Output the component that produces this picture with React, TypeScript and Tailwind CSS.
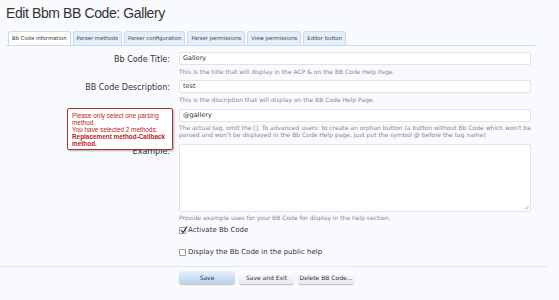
import React from "react";

const tabs = [
  "Bb Code information",
  "Parser methods",
  "Parser configuration",
  "Parser permissions",
  "View permissions",
  "Editor button",
];

function Row({ label, children, mt }: { label: string; children: React.ReactNode; mt?: string }) {
  return (
    <div className={`flex ${mt ?? ""}`}>
      <div className="w-[179px] shrink-0 pr-[9px] text-right text-[8px] leading-[13px] text-[#333] pt-[1px]">{label}</div>
      <div className="flex-1 min-w-0">{children}</div>
    </div>
  );
}

const inputCls =
  "h-[13px] bg-white border border-[#e0e3e8] rounded-[2px] text-[6.5px] leading-[11px] pl-[3px] text-[#333]";

export default function App() {
  return (
    <div
      className="w-[559px] h-[300px] bg-[#f9fafd] overflow-hidden relative"
      style={{ fontFamily: '"DejaVu Sans", Tahoma, sans-serif' }}
    >
      <div
        className="pl-[6px] pt-[4px] text-[14px] leading-[19px] tracking-[-0.4px] text-[#333]"
        style={{ fontFamily: '"Liberation Sans", sans-serif' }}
      >
        Edit Bbm BB Code: Gallery
      </div>
      <div className="mt-[8px] ml-[6px] mr-[24px] flex items-end gap-[2px] border-b border-[#c8dbef] pl-[2px]">
        {tabs.map((t, i) => (
          <div
            key={t}
            className={`h-[14px] px-[3px] text-[5.3px] leading-[13px] rounded-t-[3px] border border-b-0 ${
              i === 0 ? "bg-white border-[#c8dbef] text-[#333]" : "bg-[#e4eef9] border-[#c8dbef] text-[#444]"
            }`}
          >
            {t}
          </div>
        ))}
      </div>

      <div className="pr-[28px] mt-[6px]">
        <Row label="Bb Code Title:">
          <div className={inputCls}>Gallery</div>
          <div className="mt-[3px] text-[6px] leading-[8px] text-[#888]">
            This is the title that will display in the ACP &amp; on the BB Code Help Page.
          </div>
        </Row>
        <Row label="BB Code Description:" mt="mt-[4px]">
          <div className={inputCls}>test</div>
          <div className="mt-[3px] text-[6px] leading-[8px] text-[#888]">
            This is the discription that will display on the BB Code Help Page.
          </div>
        </Row>
        <Row label="" mt="mt-[5px]">
          <div className={inputCls}>@gallery</div>
          <div className="mt-[2px] text-[6px] leading-[7px] text-[#888]">
            The actual tag, omit the []. To advanced users: to create an orphan button (a button without Bb Code which won't be parsed
            and won't be displayed in the Bb Code Help page, just put the symbol @ before the tag name)
          </div>
        </Row>
        <Row label="Example:" mt="mt-[6px]">
          <div className="h-[68px] bg-white border border-[#e0e3e8] rounded-[2px] relative">
            <svg className="absolute right-[1px] bottom-[1px]" width="5" height="5" viewBox="0 0 5 5">
              <path d="M4.5 0.5 L0.5 4.5 M4.5 2.5 L2.5 4.5" stroke="#999" strokeWidth="0.7" />
            </svg>
          </div>
          <div className="mt-[2px] text-[6px] leading-[8px] text-[#888]">
            Provide example uses for your BB Code for display in the help section.
          </div>
          <div className="mt-[3px] flex items-center gap-[2px] text-[7px] leading-[10px] text-[#333]">
            <span className="relative w-[7px] h-[7px] border border-[#999] rounded-[1px] bg-white">
              <svg className="absolute -top-[2px] left-0" width="8" height="8" viewBox="0 0 8 8">
                <path d="M1 4 L3 6.5 L7 0.5" stroke="#333" strokeWidth="1.2" fill="none" />
              </svg>
            </span>
            Activate Bb Code
          </div>
          <div className="mt-[12px] flex items-center gap-[2px] text-[7px] leading-[10px] text-[#333]">
            <span className="w-[7px] h-[7px] border border-[#999] rounded-[1px] bg-white" />
            Display the Bb Code in the public help
          </div>
        </Row>
      </div>

      <div className="mt-[9px] mr-[11px] border-t border-[#e3e7ee]" />
      <div className="mt-[4px] pl-[179px] flex gap-[4px]">
        <div className="w-[56px] h-[13px] rounded-[3px] text-[6px] leading-[13px] text-center text-[#333] bg-gradient-to-b from-[#e6f0fa] to-[#b9d1ea] shadow-[0_1px_1px_rgba(0,0,0,0.25)]">
          Save
        </div>
        <div className="w-[55px] h-[13px] rounded-[3px] text-[6px] leading-[13px] text-center text-[#333] bg-gradient-to-b from-[#ffffff] to-[#e6e9ef] shadow-[0_1px_1px_rgba(0,0,0,0.25)]">
          Save and Exit
        </div>
        <div className="w-[56px] h-[13px] rounded-[3px] text-[6px] leading-[13px] text-center text-[#333] bg-gradient-to-b from-[#ffffff] to-[#e6e9ef] shadow-[0_1px_1px_rgba(0,0,0,0.25)]">
          Delete BB Code...
        </div>
      </div>

      <div
        className="absolute left-[67px] top-[108px] w-[106px] h-[42px] bg-white border border-[#a33] rounded-[2px] pl-[4px] pr-[2px] pt-[3px] text-[6.4px] leading-[7px] text-[#b22] shadow-[1px_1px_2px_rgba(0,0,0,0.3)]"
        style={{ fontFamily: '"Liberation Sans", sans-serif' }}
      >
        Please only select one parsing
        <br />
        method.
        <br />
        You have selected 2 methods:
        <br />
        <b>Replacement method-Callback</b>
        <br />
        <b>method.</b>
      </div>
    </div>
  );
}
